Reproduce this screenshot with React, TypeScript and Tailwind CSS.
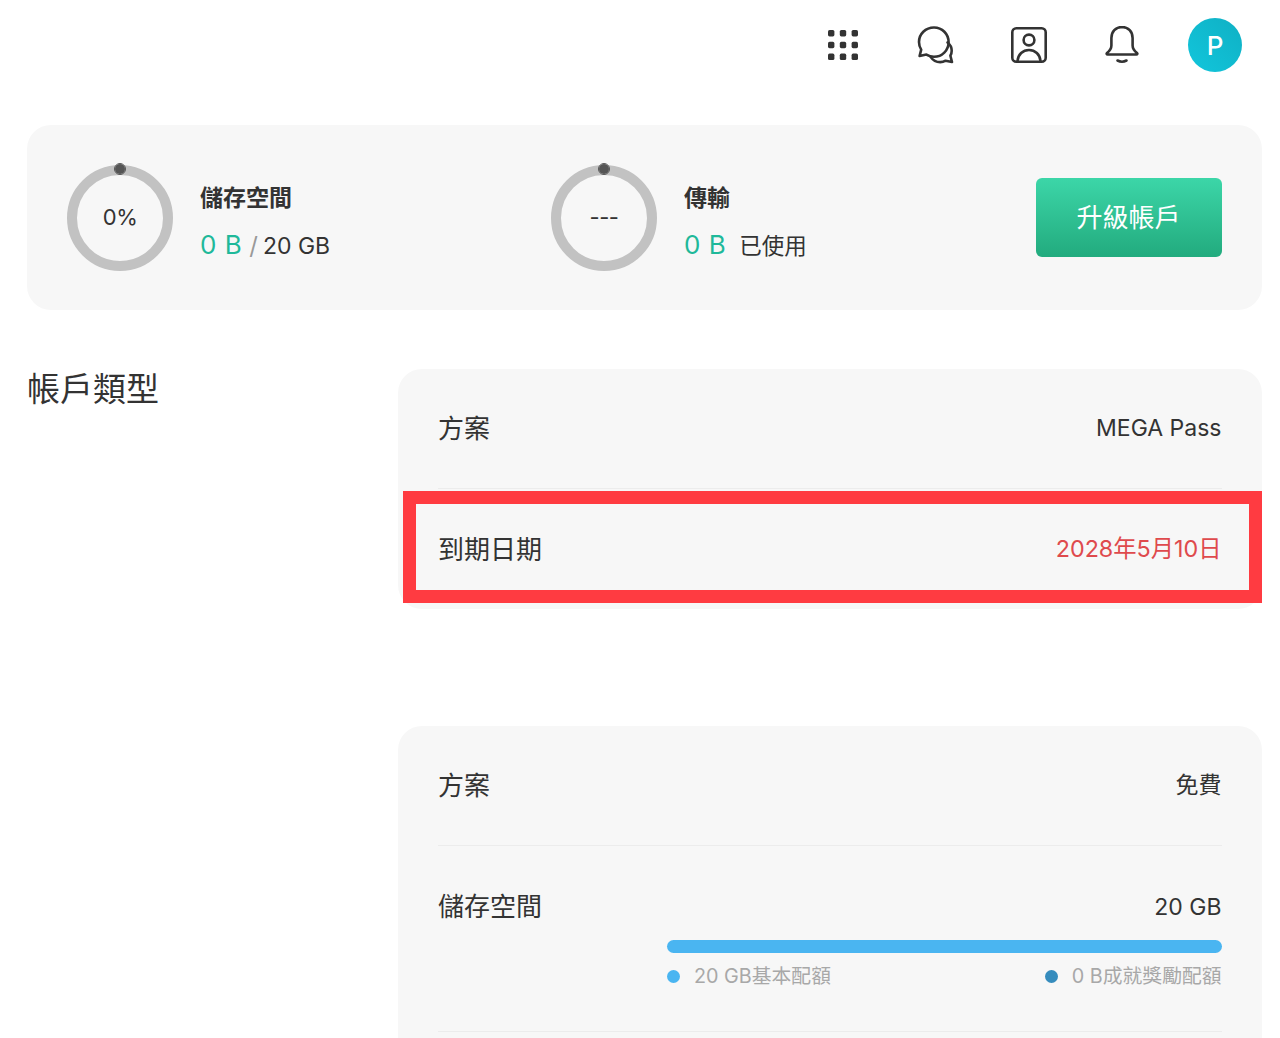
const FONT = "font-['Inter','Noto_Sans_CJK_TC',sans-serif]";

function GridIcon() {
	const pos = [0, 11.8, 23.6];
	return (
		<svg width="32" height="32" viewBox="0 0 32 32" fill="#333">
			{pos.map((y) =>
				pos.map((x) => <rect key={`${x}-${y}`} x={x + 1} y={y + 1} width="6.4" height="6.4" rx="1.6" />)
			)}
		</svg>
	);
}

function ChatIcon() {
	return (
		<svg width="40" height="40" viewBox="0 0 40 40" fill="none" stroke="#333" strokeWidth="2.6" strokeLinejoin="round" strokeLinecap="round">
			<path d="M18 2.5C9.5 2.5 3 9 3 17c0 3 .8 5.5 2.2 7.6L3.6 31l6.8-1.4c2.3 1.4 4.8 2.2 7.6 2.2 8 0 14.6-6.4 14.6-14.6S26.2 2.5 18 2.5Z" />
			<path d="M31.5 17.5c2.6 2 4.2 5 4.2 8.2 0 1.8-.5 3.5-1.3 5l1.6 6.3-6.4-1.3c-1.6.9-3.4 1.4-5.4 1.4-4.2 0-7.4-2-9.4-5" />
		</svg>
	);
}

function ContactIcon() {
	return (
		<svg width="36" height="36" viewBox="0 0 36 36" fill="none" stroke="#333" strokeWidth="2.6" strokeLinecap="round">
			<rect x="1.300" y="1.300" width="33.400" height="33.400" rx="4" />
			<circle cx="18" cy="13" r="5.400" />
			<path d="M6.500 34c.6-6.600 5.300-11 11.500-11s10.900 4.400 11.500 11" />
		</svg>
	);
}

function BellIcon() {
	return (
		<svg width="36" height="40" viewBox="0 0 36 40" fill="none" stroke="#333" strokeWidth="2.6" strokeLinecap="round" strokeLinejoin="round">
			<path d="M18 2c-6.400 0-10.600 4.800-10.600 11v7.500c0 3-1.300 5-4.400 7.500-.8.700-.3 1.500.6 1.500h28.800c.9 0 1.400-.8.600-1.500-3.100-2.500-4.400-4.500-4.400-7.500V13C28.600 6.800 24.400 2 18 2Z" />
			<path d="M13.500 35.500c2.800 1.600 6.200 1.600 9 0" />
		</svg>
	);
}

function Ring({ label }: { label: string }) {
	return (
		<div className="relative w-[106px] h-[106px] shrink-0 rounded-full border-[10px] border-[#c2c2c2] flex items-center justify-center">
			<span className="absolute top-[-11px] left-[38px] w-[10px] h-[10px] rounded-full bg-[#555] outline-1 outline-[#555]" />
			<span className="text-[22px] tracking-[-0.5px] text-[#333]">{label}</span>
		</div>
	);
}

function Row({ label, value, border = true, valueClass = 'text-[#333] text-[23px]' }: { label: string; value: string; border?: boolean; valueClass?: string }) {
	return (
		<div className={`h-[120px] flex items-center justify-between ${border ? 'border-b border-[#ececec]' : ''}`}>
			<span className="text-[26px] text-[#333]">{label}</span>
			<span className={valueClass}>{value}</span>
		</div>
	);
}

export default function App() {
	return (
		<div className={`w-[1280px] h-[1038px] overflow-hidden bg-white ${FONT}`}>
			{/* top bar */}
			<div className="h-[90px] flex items-center justify-end pr-[38px]">
				<div className="w-[93px] flex justify-center pr-[2px]"><GridIcon /></div>
				<div className="w-[93px] flex justify-center pr-[2px]"><ChatIcon /></div>
				<div className="w-[93px] flex justify-center pr-[2px]"><ContactIcon /></div>
				<div className="w-[93px] flex justify-center pr-[2px]"><BellIcon /></div>
				<div className="w-[54px] h-[54px] ml-[19px] rounded-full bg-gradient-to-bl from-[#0fb0c4] to-[#12c6dc] flex items-center justify-center text-white text-[26px] font-medium">
					P
				</div>
			</div>

			<div className="pl-[27px] pr-[18.5px]">
				{/* usage summary */}
				<div className="mt-[35px] h-[185px] rounded-[24px] bg-[#f7f7f7] flex items-center pl-[40px] pr-[40px]">
					<div className="w-[484px] flex items-center gap-[27px]">
						<Ring label="0%" />
						<div className="pt-[12px]">
							<div className="text-[23px] leading-[30px] font-bold text-[#333]">儲存空間</div>
							<div className="mt-[14px] flex items-baseline leading-[36px]">
								<span className="text-[26px] tracking-[0.5px] text-[#1fb99a]">0 B</span>
								<span className="ml-[7px] text-[24px] text-[#999]">/</span>
								<span className="ml-[5px] text-[23px] text-[#333]">20 GB</span>
							</div>
						</div>
					</div>
					<div className="flex-1 flex items-center gap-[27px]">
						<Ring label="---" />
						<div className="pt-[12px]">
							<div className="text-[23px] leading-[30px] font-bold text-[#333]">傳輸</div>
							<div className="mt-[14px] flex items-baseline leading-[36px]">
								<span className="text-[26px] tracking-[0.5px] text-[#1fb99a]">0 B</span>
								<span className="ml-[13px] text-[22.500px] text-[#333]">已使用</span>
							</div>
						</div>
					</div>
					<div className="w-[186px] h-[79px] rounded-[6px] bg-gradient-to-b from-[#3cd6a8] to-[#22ab7e] flex items-center justify-center text-white text-[26px]">
						升級帳戶
					</div>
				</div>

				{/* account type */}
				<div className="mt-[59px] flex">
					<div className="w-[371px] shrink-0 text-[33px] leading-[40px] text-[#333]">帳戶類型</div>
					<div className="flex-1">
						<div className="rounded-[24px] bg-[#f7f7f7] px-[40px]">
							<Row label="方案" value="MEGA Pass" />
							<div className="relative">
								<Row label="到期日期" value="2028年5月10日" border={false} valueClass="text-[23.300px] text-[#df4a4d]" />
								<div className="absolute left-[-35px] right-[-40px] top-[2px] h-[112px] border-[13px] border-[#ff3b41]" />
							</div>
						</div>

						<div className="mt-[117px] rounded-t-[24px] bg-[#f7f7f7] px-[40px] h-[400px]">
							<Row label="方案" value="免費" />
							<div className="h-[186px] border-b border-[#ececec]">
								<div className="pt-[43px] flex items-center justify-between leading-[36px]">
									<span className="text-[26px] text-[#333]">儲存空間</span>
									<span className="text-[23px] text-[#333]">20 GB</span>
								</div>
								<div className="mt-[15px] ml-[229px]">
									<div className="h-[13px] rounded-full bg-[#4ab5f1]" />
									<div className="mt-[9px] flex items-center justify-between text-[19.800px] leading-[28px] text-[#a8a8a8]">
										<div className="flex items-center">
											<span className="w-[13px] h-[13px] rounded-full bg-[#4ab5f1] mr-[14px]" />
											20 GB基本配額
										</div>
										<div className="flex items-center">
											<span className="w-[13px] h-[13px] rounded-full bg-[#368cbd] mr-[14px]" />
											0 B成就獎勵配額
										</div>
									</div>
								</div>
							</div>
						</div>
					</div>
				</div>
			</div>
		</div>
	);
}
